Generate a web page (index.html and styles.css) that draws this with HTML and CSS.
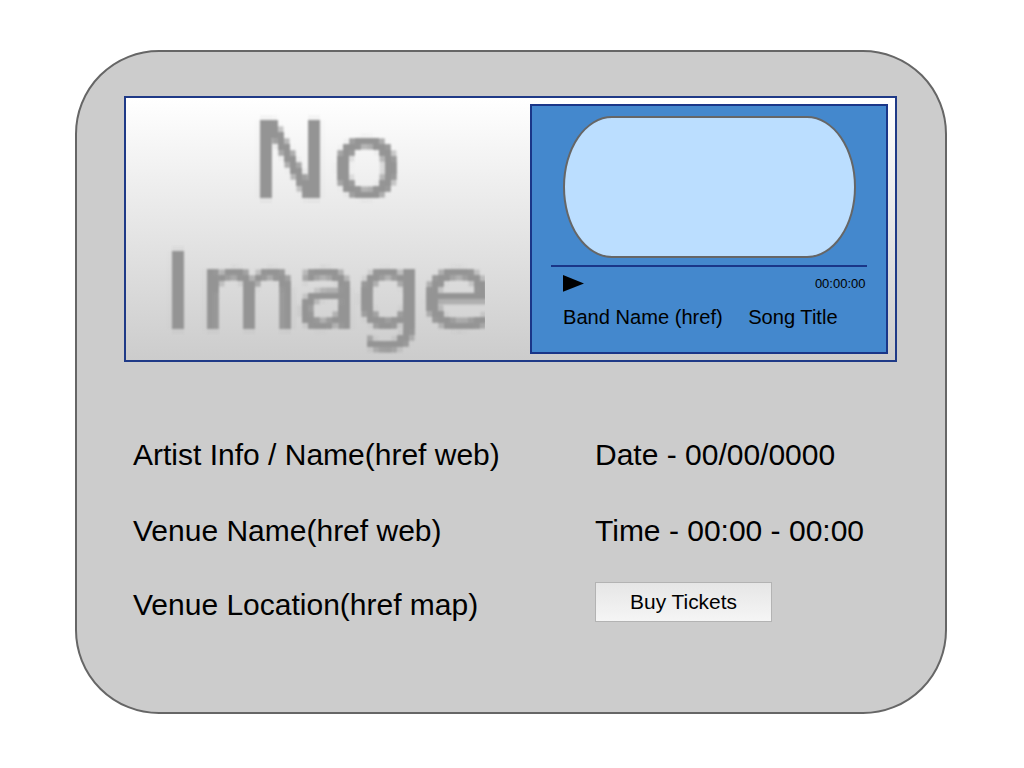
FILE: index.html
```html
<!DOCTYPE html>
<html lang="en">
<head>
<meta charset="utf-8">
<title>Event</title>
<link rel="stylesheet" href="styles.css">
</head>
<body>
<main class="card">
  <section class="hero">
    <svg class="placeholder" width="359" height="262" viewBox="126 98 359 262" role="img" aria-label="No Image">
      <defs>
        <!-- samples each letter on a 6px grid for a low-resolution look -->
        <filter id="pixelate" filterUnits="userSpaceOnUse" x="0" y="0" width="114" height="126" color-interpolation-filters="sRGB">
          <feGaussianBlur in="SourceGraphic" stdDeviation="1" result="soft"/>
          <feFlood x="2" y="2" width="2" height="2"/>
          <feComposite x="0" y="0" width="6" height="6"/>
          <feTile result="grid"/>
          <feComposite in="soft" in2="grid" operator="in"/>
          <feMorphology operator="dilate" radius="2"/>
          <feGaussianBlur stdDeviation="0.9"/>
        </filter>
      </defs>
      <g class="placeholder-text">
        <g transform="translate(248 102)" filter="url(#pixelate)"><text x="2" y="96">N</text></g>
        <g transform="translate(325 102)" filter="url(#pixelate)"><text transform="translate(6 95) scale(1.08 .98)">o</text></g>
        <g transform="translate(160 233)" filter="url(#pixelate)"><text x="2" y="96">I</text></g>
        <g transform="translate(195 233)" filter="url(#pixelate)"><text transform="translate(2.8 96) scale(.98 1)">m</text></g>
        <g transform="translate(290 233)" filter="url(#pixelate)"><text transform="translate(5 95) scale(.98)">a</text></g>
        <g transform="translate(349 233)" filter="url(#pixelate)"><text transform="translate(6 95) scale(1.02 .98)">g</text></g>
        <g transform="translate(414 233)" filter="url(#pixelate)"><text transform="translate(6 95) scale(1.12 .98)">e</text></g>
      </g>
    </svg>
    <div class="player">
      <div class="screen"></div>
      <div class="track"></div>
      <div class="controls">
        <svg class="play" width="21" height="17" viewBox="0 0 21 17"><path d="M0 0L21 8.4L0 16.8Z"/></svg>
        <span class="clock">00:00:00</span>
      </div>
      <div class="song"><span>Band Name (href)</span><span>Song Title</span></div>
    </div>
  </section>
  <section class="details">
    <div>Artist Info / Name(href web)</div>
    <div>Date - 00/00/0000</div>
    <div>Venue Name(href web)</div>
    <div>Time - 00:00 - 00:00</div>
    <div>Venue Location(href map)</div>
    <button class="buy">Buy Tickets</button>
  </section>
</main>
</body>
</html>
```
FILE: styles.css
```css
* { box-sizing: border-box; }
body {
  margin: 0;
  padding: 50px 0 0 75px;
  background: #fff;
  color: #000;
  font-family: "Liberation Sans", Arial, sans-serif;
}
.card {
  width: 872px;
  height: 664px;
  padding: 44px 47px;
  border: 2px solid #666;
  border-radius: 84px;
  background: #ccc;
}
.hero {
  display: flex;
  justify-content: space-between;
  width: 773px;
  height: 266px;
  padding-right: 7px;
  border: 2px solid #1f3a87;
  background: linear-gradient(#fff, #ccc);
}
.placeholder { display: block; overflow: hidden; }
.placeholder-text {
  font-family: "DejaVu Sans", sans-serif;
  font-size: 107px;
  fill: #949494;
  stroke: #949494;
  stroke-width: 1.4px;
}
.player {
  width: 358px;
  height: 250px;
  margin-top: 6px;
  padding: 10px 19px 0 19px;
  border: 2px solid #1a3688;
  background: #4488cd;
}
.screen {
  width: 293px;
  height: 142px;
  margin-left: 12px;
  border: 2px solid #666;
  border-radius: 49px / 71px;
  background: #bbdeff;
}
.track { height: 2px; margin-top: 7px; background: #1a3688; }
.controls {
  display: flex;
  align-items: center;
  justify-content: space-between;
  height: 17px;
  margin-top: 8px;
  padding: 0 1.5px 0 12px;
}
.clock { font-size: 13px; line-height: 17px; }
.song {
  display: flex;
  gap: 25.5px;
  margin-top: 13px;
  padding-left: 12px;
  font-size: 20.1px;
  line-height: 24px;
  white-space: nowrap;
}
.details {
  display: grid;
  grid-template-columns: 462px auto;
  grid-template-rows: 76px 74px 40px;
  align-items: start;
  justify-content: start;
  padding: 75px 0 0 9px;
  font-size: 30px;
  line-height: 36px;
}
.buy {
  width: 177px;
  height: 40px;
  margin-top: -5px;
  padding: 0;
  border: 1px solid #b3b3b3;
  background: linear-gradient(#e6e6e6, #f5f5f5);
  color: #000;
  font: 20.9px/36px "Liberation Sans", Arial, sans-serif;
}
```
